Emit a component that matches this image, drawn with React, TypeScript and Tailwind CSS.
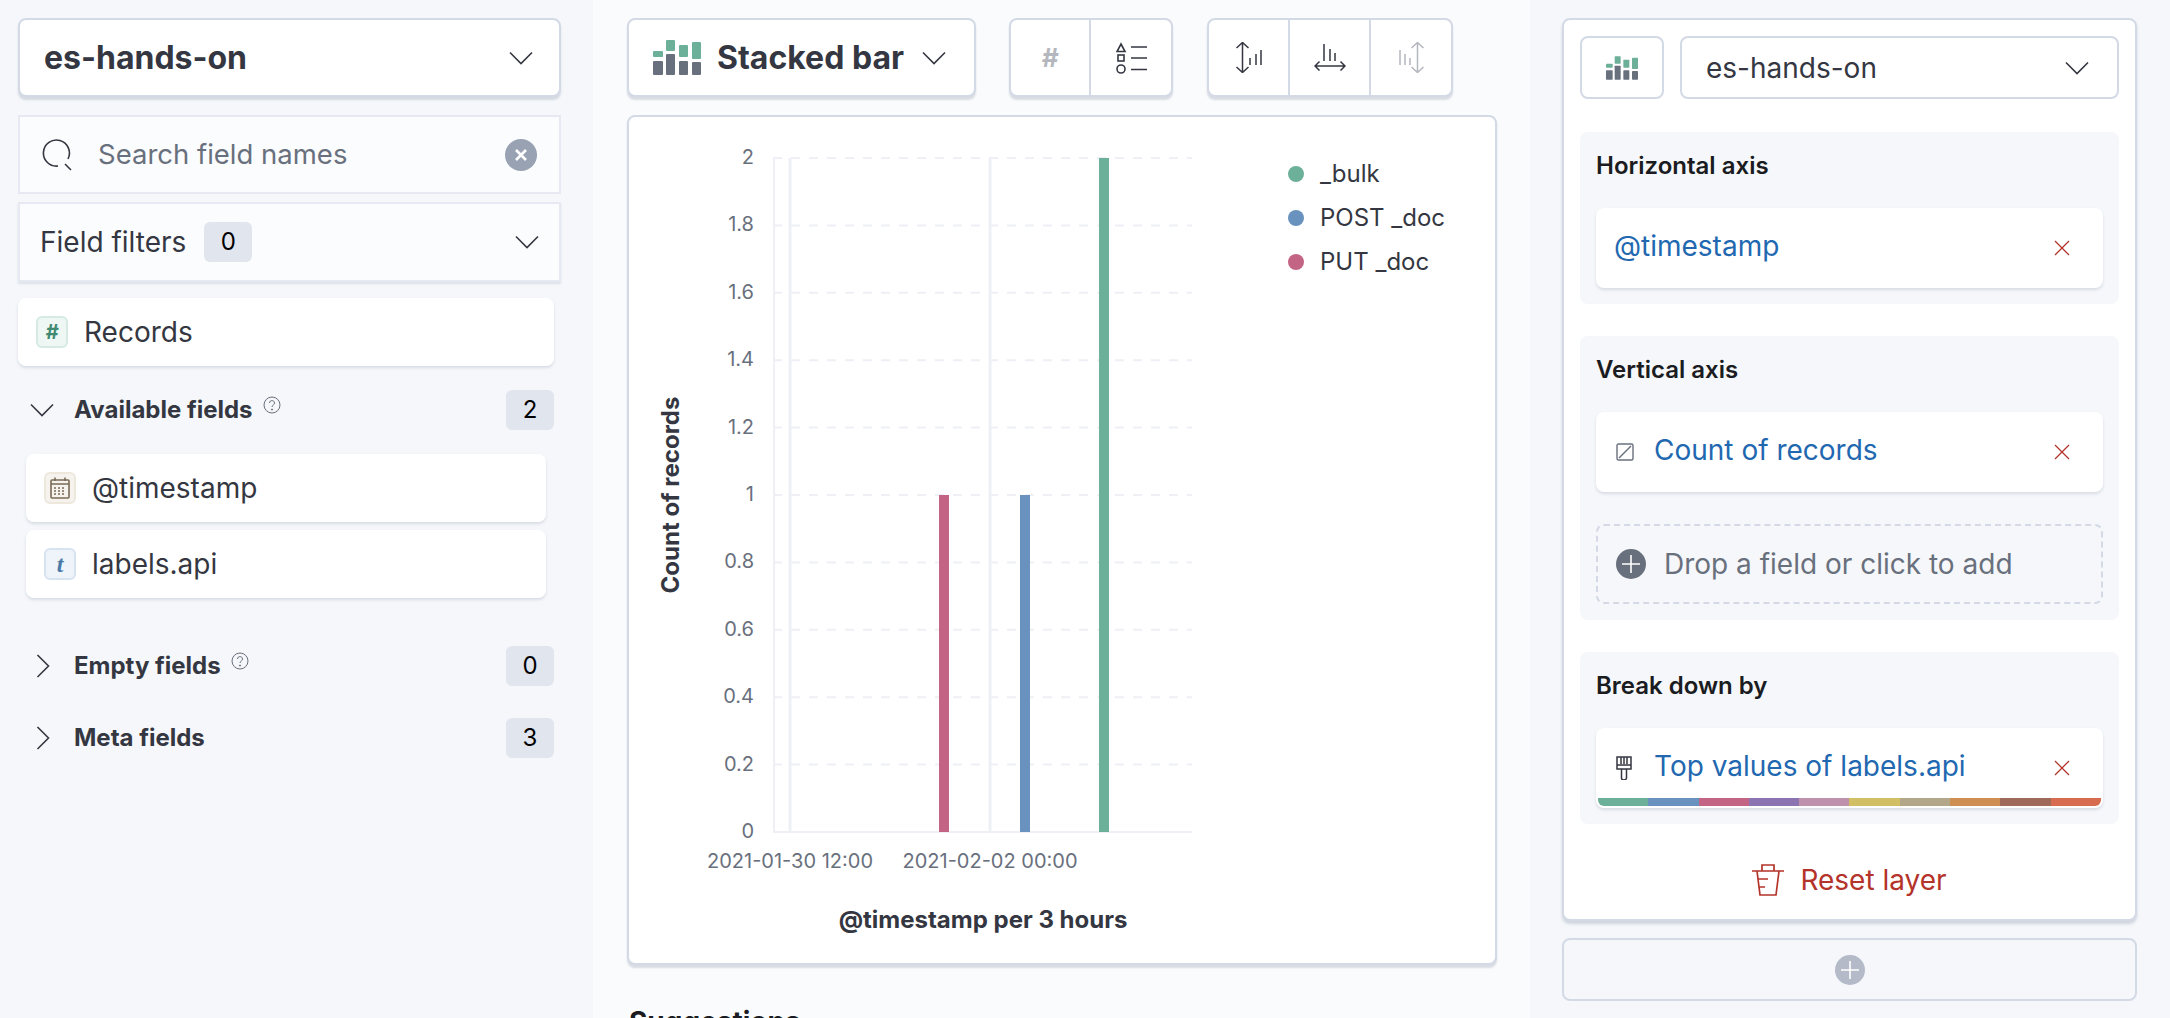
import React from 'react';

const font = { fontFamily: 'Inter, sans-serif' };

const Chevron = ({ className = '' }: { className?: string }) => (
    <svg viewBox="0 0 24 14" className={`w-6 h-3.5 ${className}`} fill="none" stroke="#343741" strokeWidth="1.6">
        <path d="M1 1.5 L12 12.5 L23 1.5" />
    </svg>
);

const ChevronRight = () => (
    <svg viewBox="0 0 14 24" className="w-3.5 h-6" fill="none" stroke="#343741" strokeWidth="1.6">
        <path d="M1.5 1 L12.5 12 L1.5 23" />
    </svg>
);

const StackedIcon = ({ className = '' }: { className?: string }) => (
    <svg viewBox="0 0 48 35" className={className}>
        <rect x="0" y="11" width="10" height="6" rx="1" fill="#6DB09A" />
        <rect x="0" y="21" width="10" height="14" rx="1" fill="#69707D" />
        <rect x="13" y="0" width="9" height="11" rx="1" fill="#6DB09A" />
        <rect x="13" y="14" width="9" height="21" rx="1" fill="#69707D" />
        <rect x="26" y="5" width="9" height="12" rx="1" fill="#6DB09A" />
        <rect x="26" y="21" width="9" height="14" rx="1" fill="#69707D" />
        <rect x="39" y="2" width="9" height="17" rx="1" fill="#6DB09A" />
        <rect x="39" y="22" width="9" height="13" rx="1" fill="#69707D" />
    </svg>
);

const HelpIcon = () => (
    <svg viewBox="0 0 18 18" className="w-[18px] h-[18px] mb-2.5" fill="none" stroke="#69707D" strokeWidth="1">
        <circle cx="9" cy="9" r="8" />
        <path d="M6.5 7 C6.5 3.8 11.5 3.8 11.5 7 C11.5 9 9 9 9 11" />
        <circle cx="9" cy="13.5" r="0.6" fill="#69707D" />
    </svg>
);

const Badge = ({ children }: { children: React.ReactNode }) => (
    <span className="w-12 h-10 rounded-md bg-[#e0e5ee] flex items-center justify-center text-[24px] text-black">{children}</span>
);

const FieldTitle = ({ open, help, label, count, className = '' }: { open?: boolean; help?: boolean; label: string; count: number; className?: string }) => (
    <div className={`flex items-center h-10 pl-[12px] pr-[7px] ${className}`}>
        <div className="w-[44px] flex">{open ? <Chevron /> : <span className="pl-1.5"><ChevronRight /></span>}</div>
        <span className="text-[24px] font-bold text-[#343741]">{label}</span>
        {help && <span className="ml-2.5"><HelpIcon /></span>}
        <span className="ml-auto"><Badge>{count}</Badge></span>
    </div>
);

const FieldTag = ({ tone, children }: { tone: string; children: React.ReactNode }) => (
    <span className={`w-8 h-8 rounded-md border-2 flex items-center justify-center shrink-0 ${tone}`}>{children}</span>
);

const FieldCard = ({ tag, label, className = '' }: { tag: React.ReactNode; label: string; className?: string }) => (
    <div className={`h-[68px] bg-white rounded-lg shadow-[0_2px_3px_rgba(152,162,179,0.3)] flex items-center gap-4 ${className}`}>
        {tag}
        <span className="text-[28px] text-[#343741]">{label}</span>
    </div>
);

const CalendarIcon = () => (
    <svg viewBox="0 0 20 22" className="w-5 h-[22px]" fill="none" stroke="#7a6c56" strokeWidth="1.6">
        <rect x="1" y="3" width="18" height="18" rx="1" />
        <path d="M1 7 H19 M5 0.5 V4 M15 0.5 V4" />
        <path d="M4 11 H16 M4 14 H16 M4 17 H16" strokeDasharray="2 2" />
    </svg>
);

const ToolButton = ({ children, last, className = 'w-[80px]' }: { children: React.ReactNode; last?: boolean; className?: string }) => (
    <div className={`h-full flex items-center justify-center ${className} ${last ? '' : 'border-r-2 border-[#d3dae6]'}`}>{children}</div>
);

const ToolGroup = ({ children }: { children: React.ReactNode }) => (
    <div className="flex h-[79px] bg-white border-2 border-[#d3dae6] rounded-lg shadow-[0_3px_2px_rgba(152,162,179,0.35)]">{children}</div>
);

const CloseX = () => (
    <svg viewBox="0 0 16 16" className="w-4 h-4 ml-auto mr-[33px]" fill="none" stroke="#B4332A" strokeWidth="1.3">
        <path d="M1 1 L15 15 M15 1 L1 15" />
    </svg>
);

const PlusCircle = ({ color, size }: { color: string; size: string }) => (
    <svg viewBox="0 0 30 30" className={size}>
        <circle cx="15" cy="15" r="15" fill={color} />
        <path d="M15 6 V24 M6 15 H24" stroke="#fff" strokeWidth="1.6" />
    </svg>
);

const AxisGroup = ({ title, children, className = '' }: { title: string; children: React.ReactNode; className?: string }) => (
    <section className={`bg-[#f5f7fa] rounded-lg px-4 pt-[17px] pb-4 ${className}`}>
        <h3 className="text-[24px] leading-[34px] font-semibold text-[#1a1c21] mb-[25px]">{title}</h3>
        {children}
    </section>
);

const DimCard = ({ icon, label, palette }: { icon?: React.ReactNode; label: string; palette?: boolean }) => (
    <div className="relative h-20 bg-white rounded-lg shadow-[0_2px_3px_rgba(152,162,179,0.3)] flex items-center pl-[18px]">
        {icon && <span className="w-[40px] pl-0.5 flex">{icon}</span>}
        <span className="text-[28px] text-[#2268b0] -mt-1">{label}</span>
        <CloseX />
        {palette && (
            <div className="absolute left-0.5 right-0.5 bottom-0.5 h-2 flex rounded-b-md overflow-hidden">
                {['#6DB09A', '#6992BF', '#C46485', '#8C73B1', '#BE91AD', '#D1BE65', '#B3A78A', '#CF8F52', '#9F6A5A', '#D86C50'].map(c => (
                    <span key={c} className="flex-1" style={{ backgroundColor: c }} />
                ))}
            </div>
        )}
    </div>
);

const yTicks = ['2', '1.8', '1.6', '1.4', '1.2', '1', '0.8', '0.6', '0.4', '0.2', '0'];
const legend = [
    { label: '_bulk', color: '#6DB09A' },
    { label: 'POST _doc', color: '#6992BF' },
    { label: 'PUT _doc', color: '#C46485' },
];

// chart drawn in page pixels, card starts at 629,117
const Chart = () => (
    <svg width="866" height="846" className="block" style={font}>
        <g transform="translate(-629 -117)">
            {yTicks.map((t, i) => {
                const y = 158 + i * 67.4;
                return (
                    <g key={t}>
                        {i < 10 && <line x1="773" x2="1192" y1={y} y2={y} stroke="#eef0f5" strokeWidth="2" strokeDasharray="9 9" />}
                        <text x="754" y={y + 6} textAnchor="end" fontSize="20" fill="#69707D">{t}</text>
                    </g>
                );
            })}
            <line x1="774" x2="774" y1="158" y2="832" stroke="#eef0f5" strokeWidth="2" />
            <line x1="790" x2="790" y1="158" y2="832" stroke="#eef0f5" strokeWidth="3" />
            <line x1="990" x2="990" y1="158" y2="832" stroke="#eef0f5" strokeWidth="3" />
            <line x1="773" x2="1192" y1="832" y2="832" stroke="#eef0f5" strokeWidth="2" />
            <rect x="939" y="495" width="10" height="337" fill="#C46485" />
            <rect x="1020" y="495" width="10" height="337" fill="#6992BF" />
            <rect x="1099" y="158" width="10" height="674" fill="#6DB09A" />
            <text x="790" y="868" textAnchor="middle" fontSize="20" fill="#69707D">2021-01-30 12:00</text>
            <text x="990" y="868" textAnchor="middle" fontSize="20" fill="#69707D">2021-02-02 00:00</text>
            <text x="983" y="928" textAnchor="middle" fontSize="24" fontWeight="700" fill="#343741">@timestamp per 3 hours</text>
            <text transform="translate(679 495) rotate(-90)" textAnchor="middle" fontSize="24" fontWeight="700" fill="#343741">Count of records</text>
            {legend.map((l, i) => (
                <g key={l.label}>
                    <circle cx="1296" cy={174 + i * 44} r="8" fill={l.color} />
                    <text x="1320" y={182 + i * 44} fontSize="24" fill="#343741">{l.label}</text>
                </g>
            ))}
        </g>
    </svg>
);

export default function App() {
    return (
        <div className="flex w-[2170px] h-[1018px] overflow-hidden bg-[#f5f7fa]" style={font}>
            {/* field list */}
            <aside className="w-[593px] shrink-0 pt-[18px] pl-[18px] pr-[32px]">
                <div className="h-[79px] flex items-center justify-between bg-white border-2 border-[#d3dae6] rounded-lg shadow-[0_3px_2px_rgba(152,162,179,0.35)] pl-[24px] pr-[26px]">
                    <span className="text-[32px] font-bold text-[#343741]">es-hands-on</span>
                    <Chevron />
                </div>
                <div className="mt-[18px] h-[79px] flex items-center bg-[#fbfcfd] border-2 border-[#e6e9f2] pl-[22px] pr-[22px]">
                    <svg viewBox="0 0 32 32" className="w-8 h-8 shrink-0" fill="none" stroke="#343741" strokeWidth="1.6">
                        <path d="M26 20 A13 13 0 1 0 16 27 M23 25 L29 31" />
                    </svg>
                    <span className="ml-[24px] text-[27.5px] text-[#69707D]">Search field names</span>
                    <span className="ml-auto w-8 h-8 rounded-full bg-[#98a2b3] flex items-center justify-center">
                        <svg viewBox="0 0 12 12" className="w-3 h-3" stroke="#fff" strokeWidth="2.6"><path d="M1 1 L11 11 M11 1 L1 11" /></svg>
                    </span>
                </div>
                <div className="mt-[8px] h-[80px] flex items-center bg-[#fbfcfd] border-2 border-[#e6e9f2] shadow-[0_2px_2px_rgba(152,162,179,0.25)] pl-[20px] pr-[20px]">
                    <span className="text-[28px] text-[#343741]">Field filters</span>
                    <span className="ml-[18px]"><Badge>0</Badge></span>
                    <Chevron className="ml-auto" />
                </div>
                <FieldCard
                    className="mt-[16px] pl-[18px] mr-[7px]"
                    label="Records"
                    tag={<FieldTag tone="bg-[#eff7f4] border-[#d5eae2]"><span className="text-[20px] font-bold italic text-[#3f8a70]">#</span></FieldTag>}
                />
                <FieldTitle open label="Available fields" help count={2} className="mt-6" />
                <div className="mt-6 pl-2 pr-[15px] flex flex-col gap-2">
                    <FieldCard
                        className="pl-[18px]"
                        label="@timestamp"
                        tag={<FieldTag tone="bg-[#f6f3ee] border-[#ede7dc]"><CalendarIcon /></FieldTag>}
                    />
                    <FieldCard
                        className="pl-[18px]"
                        label="labels.api"
                        tag={<FieldTag tone="bg-[#eff4fa] border-[#d6e3f0]"><span className="text-[24px] font-bold italic text-[#4a7aa8] font-['Liberation_Serif',serif]">t</span></FieldTag>}
                    />
                </div>
                <FieldTitle label="Empty fields" help count={0} className="mt-12" />
                <FieldTitle label="Meta fields" count={3} className="mt-8" />
            </aside>

            {/* workspace */}
            <main className="w-[937px] shrink-0 bg-[#fafbfd] pt-[18px] pl-[34px]">
                <div className="flex items-start">
                    <div className="w-[349px] h-[79px] flex items-center bg-white border-2 border-[#d3dae6] rounded-lg shadow-[0_3px_2px_rgba(152,162,179,0.35)] pl-[24px]">
                        <StackedIcon className="w-12 h-[35px]" />
                        <span className="ml-[16px] text-[32px] font-bold text-[#343741]">Stacked bar</span>
                        <Chevron className="ml-[18px]" />
                    </div>
                    <div className="ml-[33px]">
                        <ToolGroup>
                            <ToolButton><span className="text-[26px] font-bold italic text-[#b4b7bd]">#</span></ToolButton>
                            <ToolButton last>
                                <svg viewBox="0 0 32 32" className="w-8 h-8 ml-0.5" fill="none" stroke="#343741" strokeWidth="1.6">
                                    <path d="M5 2 L9 9.5 H1 Z" />
                                    <rect x="2" y="13" width="6" height="6" />
                                    <circle cx="5" cy="27" r="4" />
                                    <path d="M15 5 H31 M15 16 H31 M15 27.5 H31" />
                                </svg>
                            </ToolButton>
                        </ToolGroup>
                    </div>
                    <div className="ml-[34px]">
                        <ToolGroup>
                            <ToolButton className="w-[81px]">
                                <svg viewBox="0 0 26 31" className="w-[26px] h-[31px]" fill="none" stroke="#343741" strokeWidth="1.5">
                                    <path d="M0.5 6 L6.5 0.5 L12.5 6 M0.5 25 L6.5 30.5 L12.5 25 M6.5 1 V30 M14 16 V23 M20 12 V23 M25 8 V23" />
                                </svg>
                            </ToolButton>
                            <ToolButton className="w-[81px]">
                                <svg viewBox="0 0 32 27" className="w-8 h-[27px]" fill="none" stroke="#343741" strokeWidth="1.5">
                                    <path d="M10 0 V17 M16 5 V17 M21 9 V17 M1 22 H31 M5.5 17.5 L1 22 L5.5 26.5 M26.5 17.5 L31 22 L26.5 26.5" />
                                </svg>
                            </ToolButton>
                            <ToolButton last className="w-[80px]">
                                <svg viewBox="0 0 25 31" className="w-[25px] h-[31px]" fill="none" stroke="#b4b7bd" strokeWidth="1.5">
                                    <path d="M1 8 V23 M6 12 V23 M11 16 V23 M18.5 1 V30 M12.5 6 L18.5 0.5 L24.5 6 M12.5 25 L18.5 30.5 L24.5 25" />
                                </svg>
                            </ToolButton>
                        </ToolGroup>
                    </div>
                </div>
                <div className="mt-[18px] w-[870px] h-[850px] bg-white border-2 border-[#d3dae6] rounded-lg shadow-[0_3px_2px_rgba(152,162,179,0.35)]">
                    <Chart />
                </div>
                <h2 className="mt-[36px] ml-0.5 text-[28px] font-bold text-[#1a1c21]">Suggestions</h2>
            </main>

            {/* layer panel */}
            <aside className="flex-1 pt-[18px] pl-[32px] pr-[33px]">
                <div className="h-[903px] bg-white border-2 border-[#d3dae6] rounded-lg shadow-[0_3px_3px_rgba(152,162,179,0.4)] pt-4 px-4">
                    <div className="flex gap-4">
                        <div className="w-[84px] h-[63px] border-2 border-[#d3dae6] rounded-lg flex items-center justify-center">
                            <StackedIcon className="w-8 h-6" />
                        </div>
                        <div className="flex-1 h-[63px] border-2 border-[#d3dae6] rounded-lg flex items-center justify-between pl-6 pr-7">
                            <span className="text-[28px] text-[#343741]">es-hands-on</span>
                            <Chevron />
                        </div>
                    </div>
                    <AxisGroup title="Horizontal axis" className="mt-[33px] h-[172px]">
                        <DimCard label="@timestamp" />
                    </AxisGroup>
                    <AxisGroup title="Vertical axis" className="mt-8 h-[284px]">
                        <DimCard
                            label="Count of records"
                            icon={
                                <svg viewBox="0 0 18 18" className="w-[18px] h-[18px]" fill="none" stroke="#69707D" strokeWidth="1.4">
                                    <rect x="1" y="1" width="16" height="16" rx="1.5" />
                                    <path d="M3 15 L15 3" />
                                </svg>
                            }
                        />
                        <div className="mt-8 h-[80px] border-2 border-dashed border-[#d3dae6] rounded-lg flex items-center pl-[18px] gap-[18px]">
                            <PlusCircle color="#69707D" size="w-[30px] h-[30px]" />
                            <span className="text-[28px] text-[#69707D]">Drop a field or click to add</span>
                        </div>
                    </AxisGroup>
                    <AxisGroup title="Break down by" className="mt-8 h-[172px]">
                        <DimCard
                            label="Top values of labels.api"
                            palette
                            icon={
                                <svg viewBox="0 0 16 24" className="w-4 h-6" fill="none" stroke="#343741" strokeWidth="1.5">
                                    <path d="M1 1 H15 V13 H1 Z M1 9 H15 M5 1 V8 M8 1 V8 M11 1 V8 M5.5 13 V22 A2.5 2 0 0 0 10.5 22 V13" />
                                </svg>
                            }
                        />
                    </AxisGroup>
                    <div className="mt-[35px] flex items-center justify-center gap-4">
                        <svg viewBox="0 0 32 32" className="w-8 h-8" fill="none" stroke="#B4332A" strokeWidth="1.7">
                            <path d="M0 7 H32 M10 7 V1 H22 V7 M5 7 L8 31 H24 L27 7 M6 15 H16 M7 23 H13" />
                        </svg>
                        <span className="text-[28px] text-[#B4332A]">Reset layer</span>
                    </div>
                </div>
                <div className="mt-[17px] h-[63px] border-2 border-[#d3dae6] rounded-lg flex items-center justify-center">
                    <PlusCircle color="#b4bac8" size="w-[30px] h-[30px]" />
                </div>
            </aside>
        </div>
    );
}
